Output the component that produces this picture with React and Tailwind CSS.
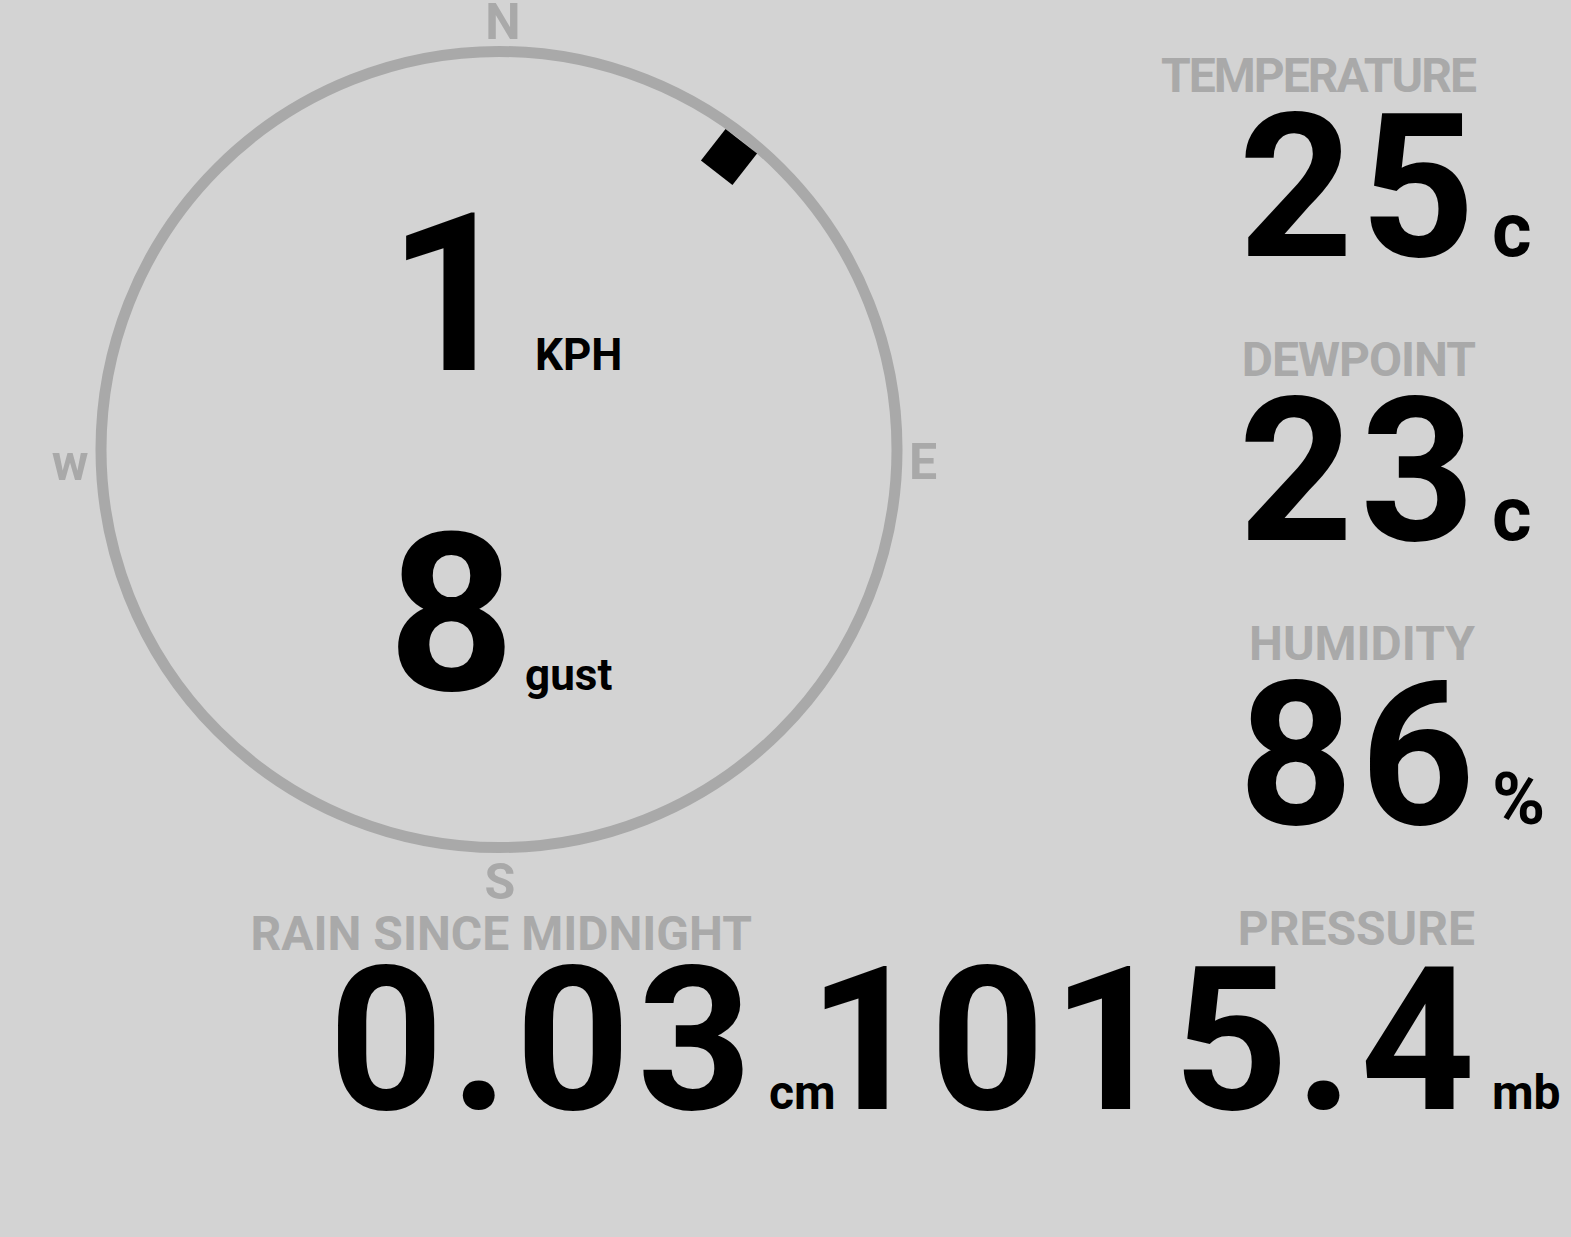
import React from "react";

function Stat({ label, value, unit, unitClass, labelClass = "" }) {
  return (
    <div className="grid grid-cols-[auto_87px] items-baseline">
      <div className={`whitespace-nowrap text-right text-[48px] leading-none font-bold text-[#a9a9a9] ${labelClass}`}>
        {label}
      </div>
      <div />
      <div className="whitespace-nowrap text-right text-[200px] leading-[176px] tracking-[7px] mr-[-7px] font-bold text-black">
        {value}
      </div>
      <div className={`whitespace-nowrap pl-[17px] leading-none font-bold text-black ${unitClass}`}>{unit}</div>
    </div>
  );
}

function Compass() {
  return (
    <div className="relative w-[1000px] h-[905px] shrink-0">
      <svg className="absolute inset-0" width="1000" height="905" viewBox="0 0 1000 905">
        <circle cx="499" cy="449.5" r="398" fill="none" stroke="#a9a9a9" strokeWidth="11" />
        <rect x="709" y="137" width="40" height="40" fill="#000" transform="rotate(38 729 157)" />
      </svg>
      <span className="absolute left-[503px] top-[2px] -translate-x-1/2 text-[50px] leading-[40px] font-bold text-[#a9a9a9]">N</span>
      <span className="absolute left-[909px] top-[437px] text-[50px] leading-none font-bold text-[#a9a9a9]">E</span>
      <span className="absolute left-[500px] top-[857px] -translate-x-1/2 text-[50px] leading-none font-bold text-[#a9a9a9]">S</span>
      <span className="absolute left-[70px] top-[438px] -translate-x-1/2 text-[50px] leading-none font-bold text-[#a9a9a9]">w</span>

      {/* wind speed + gust */}
      <div className="ml-[388px] pt-[184px] grid grid-cols-[125px_auto] gap-x-[22px] gap-y-[99px] items-baseline">
        <div className="text-right text-[221px] leading-[221px] font-bold text-black">1</div>
        <div className="text-[44px] leading-none font-bold text-black">KPH</div>
        <div className="text-right text-[221px] leading-[221px] tracking-[4px] mr-[-4px] font-bold text-black">8</div>
        <div className="ml-[-10px] text-[44px] leading-none font-bold text-black">gust</div>
      </div>
    </div>
  );
}

export default function App() {
  return (
    <div className="w-full h-[1237px] overflow-hidden bg-[#d3d3d3] font-['Roboto',sans-serif]">
      <div className="flex h-[905px]">
        <Compass />
        <div className="flex-1 flex flex-col items-end gap-[60px] pt-[52px] pr-[9px]">
          <Stat label="TEMPERATURE" value="25" unit="c" unitClass="text-[76px]" labelClass="tracking-[-2px]" />
          <Stat label="DEWPOINT" value="23" unit="c" unitClass="text-[76px]" labelClass="tracking-[-1px]" />
          <Stat label="HUMIDITY" value="86" unit="%" unitClass="text-[72px]" />
        </div>
      </div>
      <div className="flex">
        <div className="w-[839px] shrink-0 flex justify-end">
          <Stat label="RAIN SINCE MIDNIGHT" value="0.03" unit="cm" unitClass="text-[48px]" labelClass="mt-[5px] mb-[-5px]" />
        </div>
        <div className="flex-1 min-w-0 flex justify-end pr-[9px]">
          <div className="shrink-0">
            <Stat label="PRESSURE" value="1015.4" unit="mb" unitClass="text-[48px]" />
          </div>
        </div>
      </div>
    </div>
  );
}
